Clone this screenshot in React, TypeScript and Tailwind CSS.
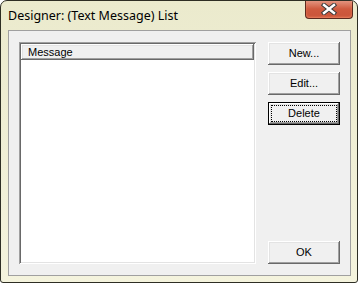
export default function App() {
  const btn =
    "w-[72px] h-[23px] shrink-0 bg-[#f0f0f0] text-[11px] text-black flex items-center justify-center shadow-[inset_-1px_-1px_#696969,inset_1px_1px_#ffffff,inset_-2px_-2px_#a0a0a0,inset_2px_2px_#e3e3e3]";
  return (
    <div className="w-[358px] h-[283px] bg-white" style={{ fontFamily: '"Liberation Sans", Arial, sans-serif' }}>
      <div className="flex flex-col w-[358px] h-[283px] border border-[#2e2e24] rounded-t-[7px] rounded-b-[3px] bg-gradient-to-b from-[#ebeacd] to-[#f4f3dd] overflow-hidden">
        <div className="flex h-[29px] shrink-0 items-start justify-between">
          <div
            className="self-center pl-[7px] pt-px text-[12.5px] text-black leading-none"
            style={{ fontFamily: '"Noto Sans", "Open Sans", sans-serif' }}
          >
            Designer: (Text Message) List
          </div>
          <div className="-mt-px mr-[4px] w-[48px] h-[19px] rounded-b-[4px] border border-t-0 border-[#5b2a1e] bg-gradient-to-b from-[#e59a86] via-[#cf5a3e] to-[#c9543a] shadow-[inset_0_-1px_2px_rgba(255,160,120,0.6)] flex items-center justify-center">
            <svg width="16" height="12" viewBox="0 0 16 12">
              <path d="M3 2 L13 10 M13 2 L3 10" stroke="#3b3b3b" strokeWidth="4.4" strokeLinecap="square" />
              <path d="M3 2 L13 10 M13 2 L3 10" stroke="#ffffff" strokeWidth="2.4" strokeLinecap="square" />
            </svg>
          </div>
        </div>
        <div className="ml-[7px] mr-[6px] h-[246px] shrink-0 border border-[#a0a0a0] bg-[#f0f0f0] flex gap-[12px] pt-[11px] pb-[11px] pl-[10px] pr-[10px]">
          <div className="w-[237px] h-[222px] bg-white p-[2px] shadow-[inset_1px_1px_#a0a0a0,inset_-1px_-1px_#ffffff,inset_2px_2px_#696969,inset_-2px_-2px_#e3e3e3]">
            <div className="h-[16px] bg-[#f0f0f0] flex items-center pl-[7px] text-[11px] text-black shadow-[inset_-1px_-1px_#696969,inset_1px_1px_#ffffff,inset_-2px_-2px_#a0a0a0,inset_2px_2px_#e3e3e3]">
              Message
            </div>
          </div>
          <div className="flex flex-col gap-[7px] w-[72px]">
            <div className={btn}>New...</div>
            <div className={btn}>Edit...</div>
            <div className="w-[72px] h-[23px] shrink-0 bg-[#f0f0f0] text-[11px] text-black flex items-center justify-center border border-black shadow-[inset_-1px_-1px_#696969,inset_1px_1px_#ffffff,inset_-2px_-2px_#a0a0a0,inset_2px_2px_#e3e3e3] outline-1 outline-dotted outline-black outline-offset-[-4px]">
              Delete
            </div>
            <div className={btn + " mt-auto"}>OK</div>
          </div>
        </div>
      </div>
    </div>
  );
}
